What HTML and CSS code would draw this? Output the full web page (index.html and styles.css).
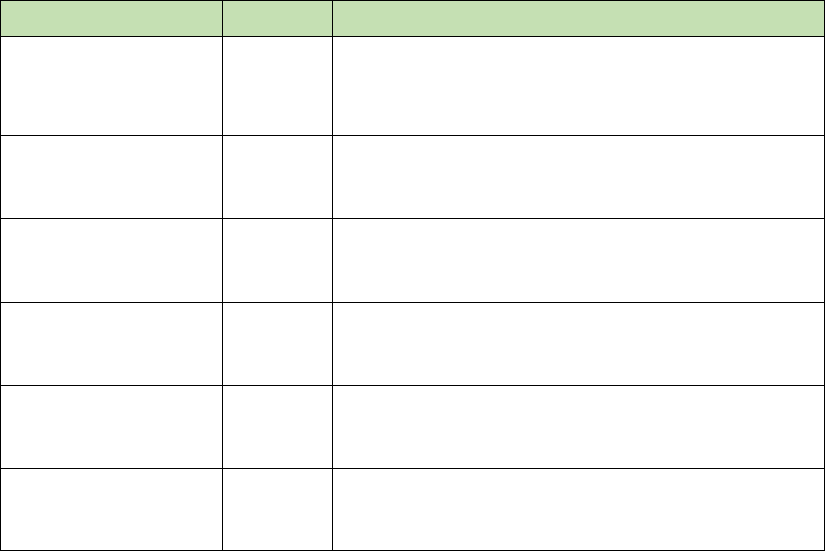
FILE: index.html
```html
<!DOCTYPE html>
<html lang="en">
<head>
<meta charset="utf-8">
<title>Table</title>
<link rel="stylesheet" href="styles.css">
</head>
<body>
<div class="grid" role="table">
  <div class="cell head" role="columnheader"></div>
  <div class="cell head" role="columnheader"></div>
  <div class="cell head" role="columnheader"></div>
  <div class="cell" role="cell"></div><div class="cell" role="cell"></div><div class="cell" role="cell"></div>
  <div class="cell" role="cell"></div><div class="cell" role="cell"></div><div class="cell" role="cell"></div>
  <div class="cell" role="cell"></div><div class="cell" role="cell"></div><div class="cell" role="cell"></div>
  <div class="cell" role="cell"></div><div class="cell" role="cell"></div><div class="cell" role="cell"></div>
  <div class="cell" role="cell"></div><div class="cell" role="cell"></div><div class="cell" role="cell"></div>
  <div class="cell" role="cell"></div><div class="cell" role="cell"></div><div class="cell" role="cell"></div>
</div>
</body>
</html>
```
FILE: styles.css
```css
html, body {
  margin: 0;
  padding: 0;
  background: #ffffff;
  font-family: "Liberation Sans", Arial, sans-serif;
}
.grid {
  display: grid;
  width: 825px;
  box-sizing: border-box;
  padding: 1px;
  gap: 1px;
  background: #000000;
  grid-template-columns: 221px 109px 491px;
  grid-template-rows: 35px 98px 82px 83px 82px 82px 81px;
}
.cell {
  background: #ffffff;
}
.cell.head {
  background: #c5e0b3;
}
```
